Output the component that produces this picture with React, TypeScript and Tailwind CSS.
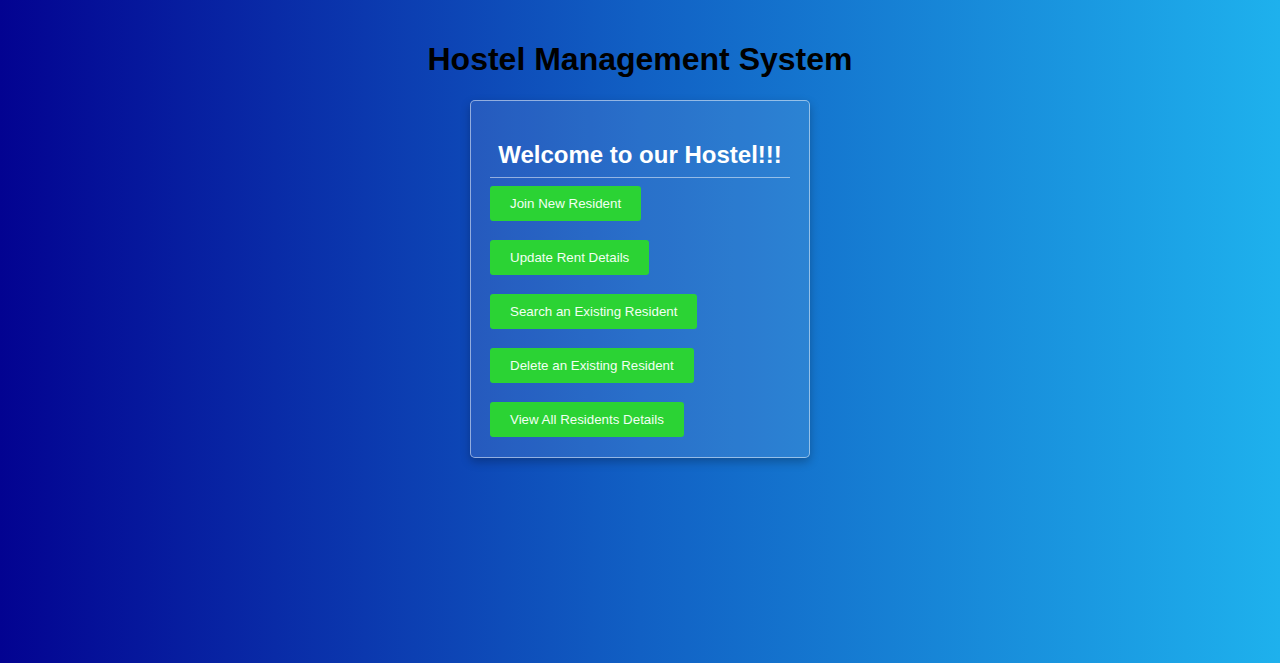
import React from "react";

const buttons = [
  "Join New Resident",
  "Update Rent Details",
  "Search an Existing Resident",
  "Delete an Existing Resident",
  "View All Residents Details",
];

export default function App() {
  return (
    <div
      className="w-full h-[663px] bg-linear-to-r/srgb from-[#030391] via-[#1160c4] to-[#1eb1ed] flex flex-col items-center"
      style={{ fontFamily: '"Liberation Sans", Arial, sans-serif' }}
    >
      <h1 className="mt-[41px] text-[32px] leading-[37px] font-bold text-black">
        Hostel Management System
      </h1>
      <div className="mt-[22px] w-[340px] rounded-[5px] border border-white/50 bg-white/10 shadow-[0_4px_10px_rgba(0,0,0,0.25)] px-[19px] pt-[40px] pb-[20px] flex flex-col">
        <h2 className="text-[24px] leading-[28px] font-bold text-white text-center">
          Welcome to our Hostel!!!
        </h2>
        <div className="mt-[8px] h-px bg-white/50" />
        <div className="mt-[8px] flex flex-col items-start gap-[19px]">
          {buttons.map((b) => (
            <button
              key={b}
              className="h-[35px] px-[20px] rounded-[3px] bg-[#2bd334] text-[13.333px] text-[#f2fff2]"
            >
              {b}
            </button>
          ))}
        </div>
      </div>
    </div>
  );
}
